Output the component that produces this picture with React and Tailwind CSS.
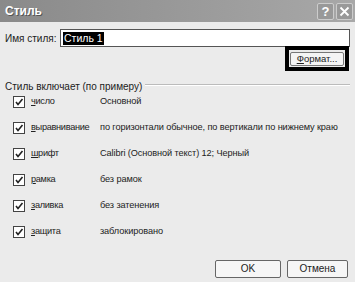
import { useState } from 'react';

const ROWS = [
  { label: 'число', value: 'Основной' },
  { label: 'выравнивание', value: 'по горизонтали обычное, по вертикали по нижнему краю' },
  { label: 'шрифт', value: 'Calibri (Основной текст) 12; Черный' },
  { label: 'рамка', value: 'без рамок' },
  { label: 'заливка', value: 'без затенения' },
  { label: 'защита', value: 'заблокировано' },
];

function Check() {
  return (
    <span className="flex h-[12px] w-[12px] shrink-0 items-center justify-center border border-[#444] bg-white">
      <svg width="10" height="10" viewBox="0 0 10 10">
        <path d="M2 5 L4 7.5 L8.5 2" fill="none" stroke="#222" strokeWidth="1.6" />
      </svg>
    </span>
  );
}

export default function App() {
  const [name, setName] = useState('Стиль 1');

  return (
    <div className="h-[282px] w-[355px] overflow-hidden bg-[#ebebeb] text-[10px] text-[#222] font-['Liberation_Sans',sans-serif]">
      {/* заголовок окна */}
      <div className="flex h-[22px] items-center justify-between bg-gradient-to-r from-[#8a8a8a] to-[#a8a8a8] pl-[5px] pr-[2px]">
        <span className="text-[12px] font-bold text-white [text-shadow:1px_1px_0_#555]">Стиль</span>
        <div className="flex gap-[2px]">
          <span className="flex h-[17px] w-[17px] items-center justify-center rounded-[2px] border border-[#ccc] bg-[#999] text-[13px] font-bold leading-none text-white">?</span>
          <span className="flex h-[17px] w-[17px] items-center justify-center rounded-[2px] border border-[#ccc] bg-[#999]">
            <svg width="11" height="11" viewBox="0 0 11 11">
              <path d="M1.5 1.5 L9.5 9.5 M9.5 1.5 L1.5 9.5" stroke="white" strokeWidth="1.8" />
            </svg>
          </span>
        </div>
      </div>

      <div className="px-[5px]">
        {/* имя стиля */}
        <div className="mt-[7px] flex items-center">
          <span className="w-[55px] shrink-0 whitespace-nowrap">Имя стиля:</span>
          <div className="flex h-[18px] flex-1 items-center border border-[#555] bg-white pl-[2px]">
            <span className="bg-black px-[1px] text-[10.5px] leading-[13px] text-white">{name}</span>
          </div>
        </div>

        <div className="mt-[-1px] flex justify-end pr-[1px]">
          <div className="border-[4px] border-black p-[1px]">
            <button
              className="h-[14px] w-[54px] rounded-[2px] border border-[#777] bg-[#f4f4f4] text-[9.5px] leading-none"
              onClick={() => setName(name)}
            >
              <span className="underline">Ф</span>ормат...
            </button>
          </div>
        </div>

        {/* группа */}
        <div className="mt-[9px] flex h-[13px] items-center gap-[3px]">
          <span className="shrink-0 whitespace-nowrap">Стиль включает (по примеру)</span>
          <span className="mt-[-4px] h-[2px] flex-1 border-t border-b border-t-[#bbb] border-b-white" />
        </div>

        <div className="mt-[-4px] flex flex-col">
          {ROWS.map((r) => (
            <div key={r.label} className="flex h-[26px] items-center pl-[8px] text-[9.2px]">
              <Check />
              <span className="ml-[6px] w-[69px] shrink-0 whitespace-nowrap tracking-[-0.3px]">
                <span className="underline">{r.label[0]}</span>
                {r.label.slice(1)}
              </span>
              <span className="whitespace-nowrap tracking-[-0.1px]">{r.value}</span>
            </div>
          ))}
        </div>

        {/* кнопки */}
        <div className="mt-[15px] flex justify-end gap-[6px] pr-[2px]">
          <button className="h-[18px] w-[66px] rounded-[2px] border border-[#666] bg-[#f6f6f6] text-[10px] leading-none">OK</button>
          <button className="h-[18px] w-[61px] rounded-[2px] border border-[#666] bg-[#f6f6f6] text-[10px] leading-none">Отмена</button>
        </div>
      </div>
    </div>
  );
}
